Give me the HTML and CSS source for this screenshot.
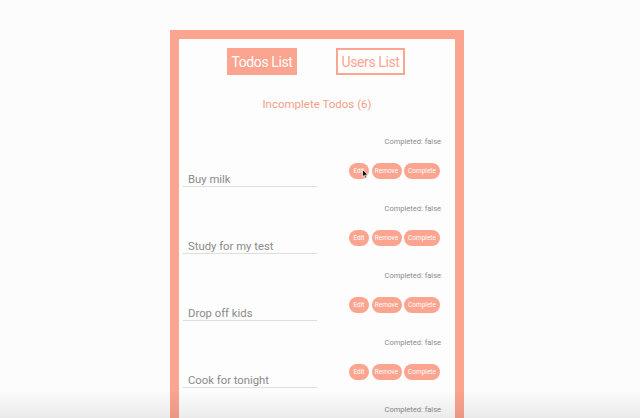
FILE: index.html
```html
<!DOCTYPE html>
<html>
<head>
<meta charset="utf-8">
<link rel="stylesheet" href="styles.css">
</head>
<body>
<div class="app">
  <nav class="nav">
    <button class="tab tab-active">Todos List</button>
    <button class="tab tab-outline">Users List</button>
  </nav>
  <h2 class="title">Incomplete Todos (6)</h2>
  <ul class="list">
    <li class="item">
      <div class="status">Completed: false</div>
      <div class="row">
        <input class="field" value="Buy milk">
        <div class="actions">
          <button class="act act-edit">Edit<svg class="cursor" width="7" height="10" viewBox="0 0 7 10"><path d="M0.5 0.5 L0.5 8 L2.3 6.3 L3.6 9.3 L4.8 8.8 L3.6 5.9 L6 5.9 Z" fill="#111" stroke="#fff" stroke-width="0.7"/></svg></button>
          <button class="act act-remove">Remove</button>
          <button class="act act-complete">Complete</button>
        </div>
      </div>
    </li>
    <li class="item">
      <div class="status">Completed: false</div>
      <div class="row">
        <input class="field" value="Study for my test">
        <div class="actions">
          <button class="act act-edit">Edit</button>
          <button class="act act-remove">Remove</button>
          <button class="act act-complete">Complete</button>
        </div>
      </div>
    </li>
    <li class="item">
      <div class="status">Completed: false</div>
      <div class="row">
        <input class="field" value="Drop off kids">
        <div class="actions">
          <button class="act act-edit">Edit</button>
          <button class="act act-remove">Remove</button>
          <button class="act act-complete">Complete</button>
        </div>
      </div>
    </li>
    <li class="item">
      <div class="status">Completed: false</div>
      <div class="row">
        <input class="field" value="Cook for tonight">
        <div class="actions">
          <button class="act act-edit">Edit</button>
          <button class="act act-remove">Remove</button>
          <button class="act act-complete">Complete</button>
        </div>
      </div>
    </li>
    <li class="item">
      <div class="status">Completed: false</div>
      <div class="row">
        <input class="field" value="Walk the dog">
        <div class="actions">
          <button class="act act-edit">Edit</button>
          <button class="act act-remove">Remove</button>
          <button class="act act-complete">Complete</button>
        </div>
      </div>
    </li>
    <li class="item">
      <div class="status">Completed: false</div>
      <div class="row">
        <input class="field" value="Clean room">
        <div class="actions">
          <button class="act act-edit">Edit</button>
          <button class="act act-remove">Remove</button>
          <button class="act act-complete">Complete</button>
        </div>
      </div>
    </li>
  </ul>
</div>
<div class="shade"></div>
</body>
</html>
```

FILE: styles.css
```css
html, body {
  margin: 0;
  padding: 0;
  height: 100%;
  overflow: hidden;
}
body {
  background: #fcfcfc;
  font-family: Roboto, "Liberation Sans", Arial, sans-serif;
}
.app {
  box-sizing: border-box;
  width: 294px;
  margin: 30px 0 0 170px;
  border: 9px solid #fba48f;
  background: #fdfdfd;
  padding: 9px 0 40px;
}
.nav {
  display: flex;
  justify-content: flex-start;
  gap: 39px;
  padding-left: 48px;
}
.tab {
  box-sizing: border-box;
  height: 27px;
  padding: 0;
  font-family: inherit;
  font-size: 14px;
  letter-spacing: -0.4px;
  line-height: 1;
  white-space: nowrap;
  border: 2px solid #fba48f;
  border-radius: 0;
}
.tab-active {
  width: 70px;
  background: #fba48f;
  color: #fff;
}
.tab-outline {
  width: 69px;
  background: #fff;
  color: #fba48f;
}
.title {
  margin: 19px 0 0;
  height: 20px;
  line-height: 20px;
  text-align: center;
  font-size: 11.5px;
  font-weight: 400;
  color: #f49d86;
}
.list {
  list-style: none;
  margin: 22px 0 0;
  padding: 0;
}
.item {
  height: 67px;
  padding: 0 14px 0 4px;
}
.status {
  height: 12px;
  line-height: 12px;
  text-align: right;
  font-size: 7.5px;
  color: #8c8c8c;
}
.row {
  display: flex;
  justify-content: space-between;
  align-items: flex-start;
  margin-top: 15px;
  height: 24px;
}
.field {
  box-sizing: border-box;
  width: 134px;
  height: 20px;
  margin-top: 4px;
  padding: 6px 5px 0;
  border: none;
  border-bottom: 1px solid #dedede;
  background: transparent;
  font-family: inherit;
  font-size: 11.3px;
  color: #8a8a8a;
  outline: none;
}
.actions {
  display: flex;
  gap: 2.5px;
  padding-right: 1px;
}
.act {
  position: relative;
  height: 16px;
  padding: 0;
  border: none;
  border-radius: 8px;
  background: #fba48f;
  color: #fff;
  font-family: inherit;
  font-size: 6.5px;
  line-height: 16px;
  text-align: center;
}
.act-edit {
  width: 20px;
}
.act-remove {
  width: 30px;
}
.act-complete {
  width: 36px;
}
.cursor {
  position: absolute;
  left: 13px;
  top: 6px;
}
.shade {
  position: fixed;
  left: 0;
  right: 0;
  bottom: 0;
  height: 28px;
  background: linear-gradient(to bottom, rgba(0,0,0,0), rgba(0,0,0,0.07));
  pointer-events: none;
}
```
